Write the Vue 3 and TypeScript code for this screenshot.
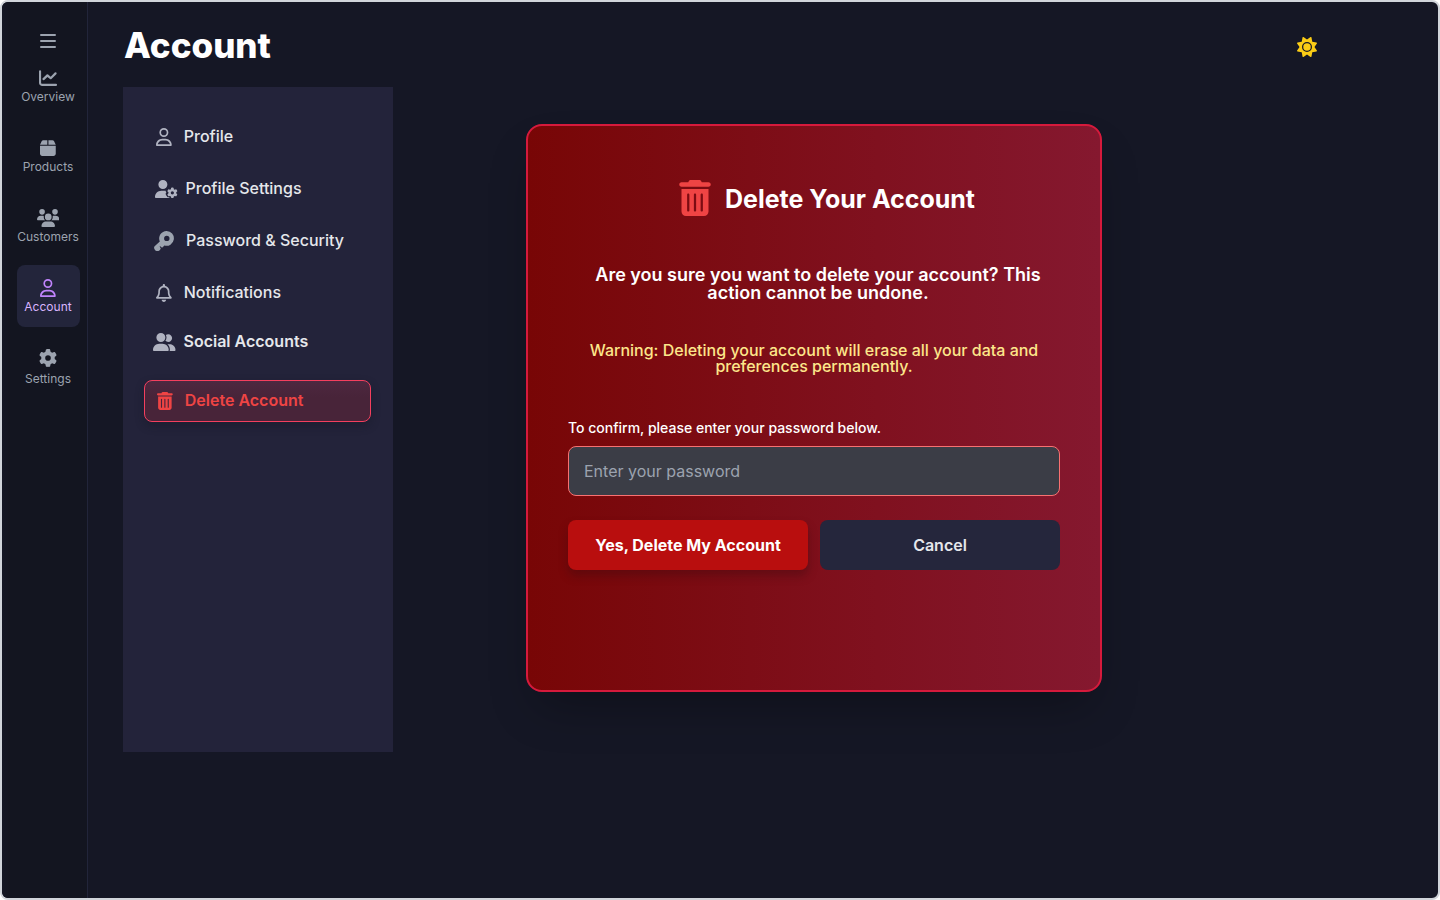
<script setup lang="ts">
import { ref } from 'vue'

interface Icon {
  box: string
  path: string
}

interface NavEntry {
  label: string
  icon: string
  variant?: string
}

const gear =
  'M495.9 166.6c3.2 8.7 .5 18.4-6.4 24.6l-43.3 39.4c1.1 8.3 1.7 16.8 1.7 25.4s-.6 17.1-1.7 25.4l43.3 39.4c6.9 6.2 9.6 15.9 6.4 24.6c-4.4 11.9-9.7 23.3-15.8 34.3l-4.7 8.1c-6.6 11-14 21.4-22.1 31.2c-5.9 7.2-15.7 9.6-24.5 6.8l-55.7-17.7c-13.4 10.3-28.2 18.9-44 25.4l-12.5 57.1c-2 9.1-9 16.3-18.2 17.8c-13.8 2.3-28 3.5-42.5 3.5s-28.7-1.2-42.5-3.5c-9.2-1.5-16.2-8.7-18.2-17.8l-12.5-57.1c-15.8-6.5-30.6-15.1-44-25.4L83.1 425.9c-8.8 2.8-18.6 .3-24.5-6.8c-8.1-9.8-15.5-20.2-22.1-31.2l-4.7-8.1c-6.1-11-11.4-22.4-15.8-34.3c-3.2-8.7-.5-18.4 6.4-24.6l43.3-39.4C64.6 273.1 64 264.6 64 256s.6-17.1 1.7-25.4L22.4 191.2c-6.9-6.2-9.6-15.9-6.4-24.6c4.4-11.9 9.7-23.3 15.8-34.3l4.7-8.1c6.6-11 14-21.4 22.1-31.2c5.9-7.2 15.7-9.6 24.5-6.8l55.7 17.7c13.4-10.3 28.2-18.9 44-25.4l12.5-57.1c2-9.1 9-16.3 18.2-17.8C227.3 1.2 241.5 0 256 0s28.7 1.2 42.5 3.5c9.2 1.5 16.2 8.7 18.2 17.8l12.5 57.1c15.8 6.5 30.6 15.1 44 25.4l55.7-17.7c8.8-2.8 18.6-.3 24.5 6.8c8.1 9.8 15.5 20.2 22.1 31.2l4.7 8.1c6.1 11 11.4 22.4 15.8 34.3zM256 336a80 80 0 1 0 0-160 80 80 0 1 0 0 160z'

const icons: Record<string, Icon> = {
  chart: {
    box: '0 0 512 512',
    path: 'M30 32a30 30 0 0 1 30 30V400c0 11 9 20 20 20H484a30 30 0 0 1 0 60H80c-44.2 0-80-35.8-80-80V62a30 30 0 0 1 30-30zM492 102a32 32 0 0 1 0 44L355 284a32 32 0 0 1-43 2L240 224 150 310a32 32 0 0 1-44-46L217 158a32 32 0 0 1 43-1l72 62L448 102a32 32 0 0 1 44 0z',
  },
  box: {
    box: '0 0 448 512',
    path: 'M50.7 58.5L0 160H208V32H93.7C75.5 32 58.9 42.3 50.7 58.5zM240 160H448L397.3 58.5C389.1 42.3 372.5 32 354.3 32H240V160zm208 32H0V416c0 35.3 28.7 64 64 64H384c35.3 0 64-28.7 64-64V192z',
  },
  users: {
    box: '0 0 640 512',
    path: 'M144 0a80 80 0 1 1 0 160A80 80 0 1 1 144 0zM512 0a80 80 0 1 1 0 160A80 80 0 1 1 512 0zM0 298.7C0 239.8 47.8 192 106.7 192h42.7c15.9 0 31 3.5 44.6 9.7c-1.3 7.2-1.9 14.7-1.9 22.3c0 38.2 16.8 72.5 43.3 96c-.2 0-.4 0-.7 0H21.3C9.6 320 0 310.4 0 298.7zM405.3 320c-.2 0-.4 0-.7 0c26.6-23.5 43.3-57.8 43.3-96c0-7.6-.7-15-1.9-22.3c13.6-6.3 28.7-9.7 44.6-9.7h42.7C592.2 192 640 239.8 640 298.7c0 11.8-9.6 21.3-21.3 21.3H405.3zM224 224a96 96 0 1 1 192 0 96 96 0 1 1 -192 0zM128 485.3C128 411.7 187.7 352 261.3 352H378.7C452.3 352 512 411.7 512 485.3c0 14.7-11.9 26.7-26.7 26.7H154.7c-14.7 0-26.7-11.9-26.7-26.7z',
  },
  user: {
    box: '0 0 448 512',
    path: 'M304 128a80 80 0 1 0 -160 0 80 80 0 1 0 160 0zM96 128a128 128 0 1 1 256 0A128 128 0 1 1 96 128zM49.3 464H398.7c-8.9-63.3-63.3-112-129-112H178.3c-65.7 0-120.1 48.7-129 112zM0 482.3C0 383.8 79.8 304 178.3 304h91.4C368.2 304 448 383.8 448 482.3c0 16.4-13.3 29.7-29.7 29.7H29.7C13.3 512 0 498.7 0 482.3z',
  },
  gear: { box: '0 0 512 512', path: gear },
  userGear: {
    box: '0 0 640 512',
    path: 'M224 0a128 128 0 1 1 0 256A128 128 0 1 1 224 0zM178.3 304h91.4c11.8 0 23.4 1.2 34.5 3.3c-2.1 18.5 7.4 35.6 21.8 44.8c-16.6 10.6-26.7 31.6-20 53.3c4 12.9 9.4 25.5 16.4 37.6s15.2 23.1 24.4 33c15.7 16.9 39.6 18.4 57.2 8.7v.9c0 9.2 2.7 18.5 7.9 26.3H29.7C13.3 512 0 498.7 0 482.3C0 383.8 79.8 304 178.3 304z',
  },
  key: {
    box: '0 0 20 20',
    path: 'M12.6 0a7.4 7.4 0 1 1-2.2 14.5l-1.7 1.7c-.4.4-.9.3-1.3 0l-.9-.8c-.5-.4-1.1.2-.7.7l.7.9c.4.5.2.9-.1 1.3l-1 1.1c-1.2 1.2-3 .9-4.2-.2s-1.7-3-.3-4.2l4.9-4.6A7.4 7.4 0 0 1 12.6 0zM12.8 4.7a2.7 2.7 0 1 0 0 5.4 2.7 2.7 0 0 0 0-5.4z',
  },
  bell: {
    box: '0 0 448 512',
    path: 'M224 0c-17.7 0-32 14.3-32 32V51.2C119 66 64 130.6 64 208v25.4c0 45.4-15.5 89.5-43.8 124.9L5.3 377c-5.8 7.2-6.9 17.1-2.9 25.4S14.8 416 24 416H424c9.2 0 17.6-5.3 21.6-13.6s2.9-18.2-2.9-25.4l-14.9-18.6C399.5 322.9 384 278.8 384 233.4V208c0-77.4-55-142-128-156.8V32c0-17.7-14.3-32-32-32zm0 96c61.9 0 112 50.1 112 112v25.4c0 47.9 13.9 94.6 39.7 134.6H72.3C98.1 328 112 281.3 112 233.4V208c0-61.9 50.1-112 112-112zm64 352H224 160c0 17 6.7 33.3 18.7 45.3s28.3 18.7 45.3 18.7s33.3-6.7 45.3-18.7s18.7-28.3 18.7-45.3z',
  },
  userGroup: {
    box: '0 0 640 512',
    path: 'M96 128a128 128 0 1 1 256 0A128 128 0 1 1 96 128zM0 482.3C0 383.8 79.8 304 178.3 304h91.4C368.2 304 448 383.8 448 482.3c0 16.4-13.3 29.7-29.7 29.7H29.7C13.3 512 0 498.7 0 482.3zM609.3 512H471.4c5.4-9.4 8.6-20.3 8.6-32v-8c0-60.7-27.1-115.2-69.8-151.8c2.4-.1 4.7-.2 7.1-.2h61.4C567.8 320 640 392.2 640 481.3c0 17-13.8 30.7-30.7 30.7zM432 256c-31 0-59-12.6-79.3-32.9C372.4 196.5 384 163.6 384 128c0-26.8-6.6-52.1-18.3-74.3C384.3 40.1 407.2 32 432 32c61.9 0 112 50.1 112 112s-50.1 112-112 112z',
  },
  trash: {
    box: '0 0 448 512',
    path: 'M135.2 17.7L128 32H32C14.3 32 0 46.3 0 64S14.3 96 32 96H416c17.7 0 32-14.3 32-32s-14.3-32-32-32H320l-7.2-14.3C307.4 6.8 296.3 0 284.2 0H163.8c-12.1 0-23.2 6.8-28.6 17.7zM32 128V448c0 35.3 28.7 64 64 64H352c35.3 0 64-28.7 64-64V128H32zm96 64c8.8 0 16 7.2 16 16V432c0 8.8-7.2 16-16 16s-16-7.2-16-16V208c0-8.8 7.2-16 16-16zm96 0c8.8 0 16 7.2 16 16V432c0 8.8-7.2 16-16 16s-16-7.2-16-16V208c0-8.8 7.2-16 16-16zm96 0c8.8 0 16 7.2 16 16V432c0 8.8-7.2 16-16 16s-16-7.2-16-16V208c0-8.8 7.2-16 16-16z',
  },
}

const mainNav: NavEntry[] = [
  { label: 'Overview', icon: 'chart' },
  { label: 'Products', icon: 'box' },
  { label: 'Customers', icon: 'users' },
  { label: 'Account', icon: 'user', variant: 'active' },
  { label: 'Settings', icon: 'gear', variant: 'spaced' },
]

const accountNav: NavEntry[] = [
  { label: 'Profile', icon: 'user' },
  { label: 'Profile Settings', icon: 'userGear', variant: 'wide' },
  { label: 'Password & Security', icon: 'key', variant: 'key' },
  { label: 'Notifications', icon: 'bell' },
  { label: 'Social Accounts', icon: 'userGroup', variant: 'social' },
  { label: 'Delete Account', icon: 'trash', variant: 'danger' },
]

const password = ref('')
</script>

<template>
  <div class="app">
    <aside class="sidebar">
      <button class="menu" type="button" aria-label="Toggle menu">
        <svg viewBox="0 0 16 14" width="16" height="14">
          <path d="M1 1h14M1 7h14M1 13h14" stroke="currentColor" stroke-width="2" stroke-linecap="round" />
        </svg>
      </button>
      <nav class="rail" aria-label="Main">
        <a v-for="item in mainNav" :key="item.label" href="#" :class="['rail-link', item.variant]">
          <svg :viewBox="icons[item.icon].box" height="18" aria-hidden="true">
            <path :d="icons[item.icon].path" fill="currentColor" />
          </svg>
          <span>{{ item.label }}</span>
        </a>
      </nav>
    </aside>

    <main class="main">
      <header class="header">
        <h1>Account</h1>
        <button class="theme" type="button" aria-label="Switch theme">
          <svg viewBox="0 0 512 512" width="20" height="20">
            <path
              fill="currentColor"
              d="M361.5 1.2c5 2.1 8.6 6.6 9.6 11.9L391 121l107.9 19.8c5.3 1 9.8 4.6 11.9 9.6s1.5 10.7-1.6 15.2L446.9 256l62.3 90.3c3.1 4.5 3.7 10.2 1.6 15.2s-6.6 8.6-11.9 9.6L391 391 371.1 498.9c-1 5.3-4.6 9.8-9.6 11.9s-10.7 1.5-15.2-1.6L256 446.9l-90.3 62.3c-4.5 3.1-10.2 3.7-15.2 1.6s-8.6-6.6-9.6-11.9L121 391 13.1 371.1c-5.3-1-9.8-4.6-11.9-9.6s-1.5-10.7 1.6-15.2L65.1 256 2.8 165.7c-3.1-4.5-3.7-10.2-1.6-15.2s6.6-8.6 11.9-9.6L121 121 140.9 13.1c1-5.3 4.6-9.8 9.6-11.9s10.7-1.5 15.2 1.6L256 65.1 346.3 2.8c4.5-3.1 10.2-3.7 15.2-1.6zM160 256a96 96 0 1 1 192 0 96 96 0 1 1 -192 0zm224 0a128 128 0 1 0 -256 0 128 128 0 1 0 256 0z"
            />
          </svg>
        </button>
      </header>

      <div class="content">
        <nav class="panel" aria-label="Account">
          <a v-for="item in accountNav" :key="item.label" href="#" :class="['panel-link', item.variant]">
            <svg :viewBox="icons[item.icon].box" aria-hidden="true">
              <path :d="icons[item.icon].path" fill="currentColor" />
              <path
                v-if="item.icon === 'userGear'"
                :d="gear"
                transform="translate(345 216) scale(.58)"
                fill="currentColor"
              />
            </svg>
            <span>{{ item.label }}</span>
          </a>
        </nav>

        <section class="stage">
          <form class="card" @submit.prevent>
            <div class="card-head">
              <svg :viewBox="icons.trash.box" width="32" height="36" aria-hidden="true">
                <path :d="icons.trash.path" fill="currentColor" />
              </svg>
              <h2>Delete Your Account</h2>
            </div>
            <p class="question">Are you sure you want to delete your account? This action cannot be undone.</p>
            <p class="warning">Warning: Deleting your account will erase all your data and preferences permanently.</p>
            <label for="password">To confirm, please enter your password below.</label>
            <input id="password" v-model="password" type="password" placeholder="Enter your password" />
            <div class="actions">
              <button class="confirm" type="submit">Yes, Delete My Account</button>
              <button class="cancel" type="button">Cancel</button>
            </div>
          </form>
        </section>
      </div>
    </main>
  </div>
</template>

<style>
body {
  background: #fff;
}
</style>

<style scoped>
.app {
  display: flex;
  box-sizing: border-box;
  min-height: 100vh;
  overflow: hidden;
  border: 2px solid #d1d5db;
  border-radius: 8px;
  background: #151725;
  color: #e5e7eb;
  font-family: Inter, "Liberation Sans", sans-serif;
}

.app *,
.app *::before {
  box-sizing: border-box;
}

svg {
  display: block;
  flex: none;
}

a {
  color: inherit;
  text-decoration: none;
}

button {
  padding: 0;
  border: 0;
  background: none;
  font: inherit;
  cursor: pointer;
}

.sidebar {
  display: flex;
  flex: none;
  flex-direction: column;
  align-items: center;
  width: 86px;
  padding: 32px 7px 0 14px;
  border-right: 1px solid #22253a;
  background: linear-gradient(90deg, #151725, #131520 10%);
  color: #9ca3af;
}

.menu {
  margin-bottom: 7px;
  color: #9ca3af;
}

.rail {
  display: flex;
  flex-direction: column;
  align-items: center;
  gap: 8px;
}

.rail-link {
  display: flex;
  flex-direction: column;
  align-items: center;
  gap: 1px;
  width: 63px;
  height: 62px;
  padding-top: 14px;
  border-radius: 8px;
  font-size: 12px;
  line-height: 18px;
}

.rail-link.active {
  background: #23253b;
  color: #c084fc;
}

.rail-link.active span {
  color: #d8b4fe;
}

.rail-link.spaced {
  gap: 3px;
}

.main {
  flex: 1;
  min-width: 0;
  padding-left: 35px;
}

.header {
  display: flex;
  align-items: center;
  justify-content: space-between;
  height: 85px;
  padding: 0 121px 0 1px;
}

h1 {
  margin: 0;
  color: #fff;
  font-size: 35px;
  font-weight: 800;
  line-height: 40px;
}

.theme {
  margin-top: 4px;
  color: #facc15;
}

.content {
  display: flex;
  align-items: flex-start;
  padding-right: 203px;
}

.panel {
  display: flex;
  flex: none;
  flex-direction: column;
  gap: 12px;
  width: 270px;
  min-height: 665px;
  padding: 29px 22px 0 21px;
  background: #23233a;
}

.panel-link {
  display: flex;
  align-items: center;
  gap: 12px;
  height: 40px;
  padding-left: 12px;
  border-radius: 8px;
  font-size: 16px;
  font-weight: 500;
}

.panel-link svg {
  height: 18px;
  margin-top: 2px;
  color: #b0b3c1;
}

.panel-link.wide {
  gap: 8px;
  padding-left: 11px;
}

.panel-link.key {
  gap: 12px;
  padding-left: 10px;
}

.panel-link.key svg {
  height: 20px;
  color: #9ca3af;
}

.panel-link.social {
  gap: 8px;
  height: 34px;
  padding-left: 9px;
  font-weight: 600;
}

.panel-link.danger {
  height: 42px;
  margin-top: 10px;
  padding-bottom: 2px;
  border: 1px solid #f43f5e;
  background: linear-gradient(180deg, #4d2840, #482439 40%);
  box-shadow: 0 4px 8px rgba(20, 22, 36, 0.4);
  color: #ef4444;
  font-weight: 600;
}

.panel-link.danger svg {
  color: #ef4444;
}

.stage {
  display: flex;
  flex: 1;
  justify-content: center;
  padding-top: 37px;
}

.card {
  display: flex;
  flex-direction: column;
  width: 100%;
  max-width: 576px;
  min-height: 568px;
  padding: 54px 40px 40px;
  border: 2px solid #d61a3c;
  border-radius: 16px;
  background: linear-gradient(90deg, #780606, #85182f);
  box-shadow: 0 24px 48px -12px rgba(0, 0, 0, 0.3);
}

.card-head {
  display: flex;
  align-items: center;
  justify-content: center;
  gap: 14px;
  padding-left: 26px;
  color: #ef4444;
}

h2 {
  margin: 2px 0 0;
  color: #fff;
  font-size: 25px;
  font-weight: 700;
  line-height: 32px;
}

p {
  margin: 0;
  text-align: center;
}

.question {
  margin-top: 50px;
  padding: 0 16px 0 24px;
  color: #fff;
  font-size: 18px;
  font-weight: 600;
  line-height: 18px;
}

.warning {
  margin-top: 40px;
  padding: 0 16px;
  color: #fde68a;
  font-size: 16px;
  font-weight: 500;
  line-height: 16px;
}

label {
  margin-top: 44px;
  color: #fff;
  font-size: 14px;
  font-weight: 500;
  line-height: 20px;
}

input {
  width: 100%;
  height: 50px;
  margin-top: 8px;
  padding: 0 15px;
  border: 1px solid #f87171;
  border-radius: 8px;
  outline: none;
  background: #3b3d46;
  color: #fff;
  font: inherit;
  font-size: 16px;
}

input::placeholder {
  color: #9ca3af;
  opacity: 1;
}

.actions {
  display: flex;
  gap: 12px;
  margin-top: 24px;
}

.actions button {
  flex: 1;
  height: 50px;
  border-radius: 8px;
  font-size: 16px;
}

.confirm {
  background: #b90e0e;
  box-shadow: 0 6px 10px rgba(60, 10, 16, 0.4);
  color: #fff;
  font-weight: 700;
}

.cancel {
  background: #25263c;
  color: #e5e7eb;
  font-weight: 600;
}
</style>
